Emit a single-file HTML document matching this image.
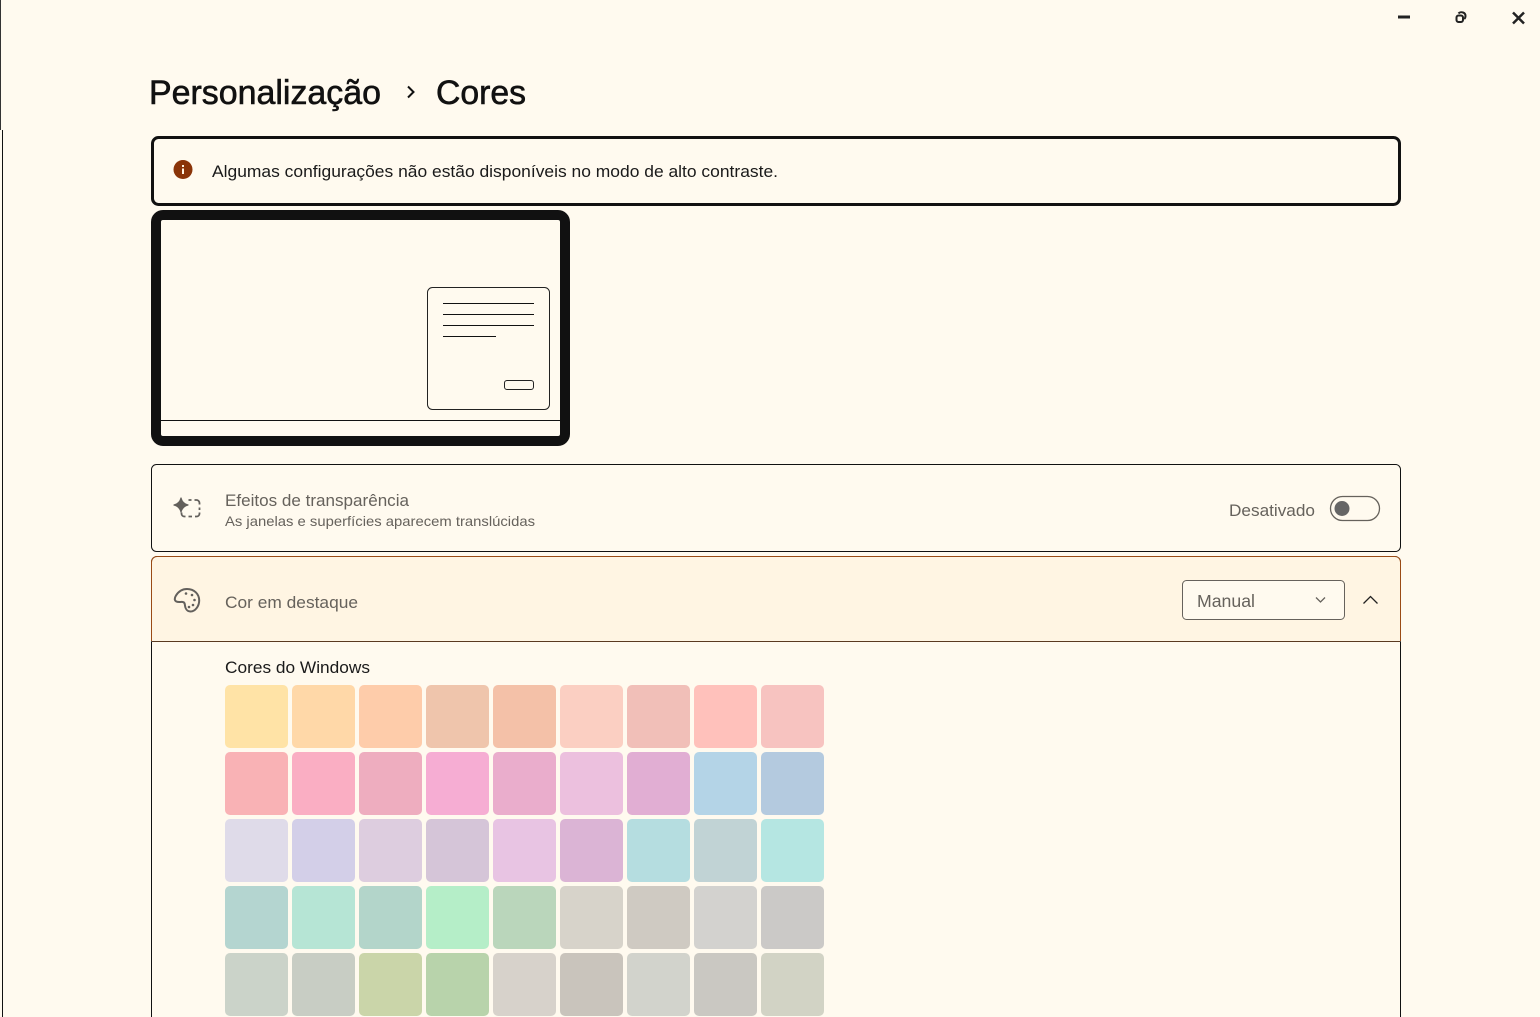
<!DOCTYPE html>
<html lang="pt"><head><meta charset="utf-8"><title>Cores</title>
<style>
html,body{margin:0;padding:0;width:1540px;height:1017px;overflow:hidden;background:#FFFAEF}
svg{display:block;position:absolute;left:0;top:0}
text{font-family:"Liberation Sans",sans-serif}
</style></head><body>
<svg width="1540" height="1017" viewBox="0 0 1540 1017" xmlns="http://www.w3.org/2000/svg">
<rect width="1540" height="1017" fill="#FFFAEF"/>
<rect x="0" y="0" width="1" height="130" fill="#333"/>
<rect x="2" y="130" width="1" height="887" fill="#111"/>

<!-- window controls -->
<rect x="1398" y="15.500" width="12" height="3" fill="#222"/>
<g fill="none" stroke="#222" stroke-width="2">
<rect x="1456.500" y="15.500" width="6.500" height="6.500" rx="2"/>
<path d="M1458.500 13.500c1-1.300 3-1.500 4.500-1 1.500.5 2.500 2 2.500 3.500 0 1.300-.5 2.300-1.300 3"/>
</g>
<path d="M1513 12.500l11 11M1524 12.500l-11 11" stroke="#222" stroke-width="2.500" fill="none"/>

<!-- title -->
<text x="149" y="104" font-size="34" fill="#111" stroke="#111" stroke-width="0.6" textLength="232" lengthAdjust="spacingAndGlyphs">Personalização</text>
<path d="M408 86.500l5.500 5.500-5.500 5.500" fill="none" stroke="#111" stroke-width="2"/>
<text x="436" y="104" font-size="34" fill="#111" stroke="#111" stroke-width="0.6" textLength="90" lengthAdjust="spacingAndGlyphs">Cores</text>

<!-- alert -->
<rect x="152.500" y="137.500" width="1247" height="67" rx="6" fill="#FFFAEF" stroke="#111" stroke-width="3"/>
<circle cx="183" cy="169.500" r="9.500" fill="#8A3408"/>
<rect x="182" y="168.500" width="2" height="5.500" fill="#FFF5E3"/>
<rect x="182" y="165" width="2" height="2" fill="#FFF5E3"/>
<text x="212" y="177" font-size="17" fill="#1a1a1a" textLength="566" lengthAdjust="spacingAndGlyphs">Algumas configurações não estão disponíveis no modo de alto contraste.</text>

<!-- preview -->
<rect x="156" y="215" width="409" height="226" rx="7" fill="#FFFAEF" stroke="#111" stroke-width="10"/>
<rect x="161" y="420" width="399" height="1" fill="#111"/>
<rect x="427.500" y="287.500" width="122" height="122" rx="5" fill="#FFFAEF" stroke="#222" stroke-width="1"/>
<rect x="443" y="303" width="91" height="1" fill="#111"/>
<rect x="443" y="314" width="91" height="1" fill="#111"/>
<rect x="443" y="325" width="91" height="1" fill="#111"/>
<rect x="443" y="336" width="53" height="1" fill="#111"/>
<rect x="504.500" y="380.500" width="29" height="9" rx="2.500" fill="none" stroke="#222" stroke-width="1"/>

<!-- transparency card -->
<rect x="151.500" y="464.500" width="1249" height="87" rx="5" fill="#FFFAEF" stroke="#111" stroke-width="1"/>
<path d="M181 498c1 4 3 6 7 7-4 1-6 3-7 7-1-4-3-6-7-7 4-1 6-3 7-7z" fill="#63605c" stroke="#63605c" stroke-width="1.200" stroke-linejoin="round"/>
<path d="M188.500 500h3M194.500 500h2c1.500 0 3 1.300 3 3v1.500M199.500 507.500v2.500M199.500 512.500v1c0 1.700-1.300 3-3 3h-1.500M192 516.500h-3.500M185.500 516.500h-1c-1.700 0-3-1.300-3-3v-1" fill="none" stroke="#63605c" stroke-width="1.800"/>
<text x="225" y="506" font-size="17" fill="#66625c" textLength="184" lengthAdjust="spacingAndGlyphs">Efeitos de transparência</text>
<text x="225" y="526" font-size="14" fill="#66625c" textLength="310" lengthAdjust="spacingAndGlyphs">As janelas e superfícies aparecem translúcidas</text>
<text x="1229" y="516" font-size="17" fill="#66625c" textLength="86" lengthAdjust="spacingAndGlyphs">Desativado</text>
<rect x="1330.500" y="496.500" width="49" height="24" rx="12" fill="none" stroke="#66625c" stroke-width="1.300"/>
<circle cx="1342" cy="508.500" r="7.500" fill="#666"/>

<!-- accent card -->
<path d="M151.500 1017V562c0-3 2.500-5.500 5.500-5.500h1238c3 0 5.500 2.500 5.500 5.500v455" fill="#FFFAEF" stroke="#111" stroke-width="1"/>
<path d="M151.500 641.500V562c0-3 2.500-5.500 5.500-5.500h1238c3 0 5.500 2.500 5.500 5.500v79.500z" fill="#FFF5E3"/>
<path d="M151.500 641V562c0-3 2.500-5.500 5.500-5.500h1238c3 0 5.500 2.500 5.500 5.500v79" fill="none" stroke="#9A4A14" stroke-width="1"/>
<rect x="152" y="641" width="1248" height="1" fill="#5a3a20"/>
<path d="M187 589c-5 0-8.500 2.500-11 6.500-1.700 2.700-1.700 5 .3 6 2 1 4.500.2 6.500.5 2 .3 2 2 2.200 3.700.3 2.300 1.700 5.800 5.500 5.800 4.800 0 8.700-5.500 8.700-11 0-6.500-5-11.500-12.200-11.500z" fill="none" stroke="#63605c" stroke-width="2"/>
<circle cx="186" cy="593.500" r="1.300" fill="#63605c"/><circle cx="192" cy="595" r="1.300" fill="#63605c"/><circle cx="194.500" cy="600" r="1.300" fill="#63605c"/><circle cx="193" cy="605" r="1.300" fill="#63605c"/><circle cx="189" cy="607" r="1.300" fill="#63605c"/>
<text x="225" y="608" font-size="17" fill="#66625c" textLength="133" lengthAdjust="spacingAndGlyphs">Cor em destaque</text>
<rect x="1182.500" y="580.500" width="162" height="39" rx="4" fill="#FFFAEF" stroke="#66625c" stroke-width="1"/>
<text x="1197" y="607" font-size="17.500" fill="#66625c" textLength="58" lengthAdjust="spacingAndGlyphs">Manual</text>
<path d="M1316 597.500l4.500 4.500 4.500-4.500" fill="none" stroke="#66625c" stroke-width="1.300"/>
<path d="M1363.500 603.500l7-7 7 7" fill="none" stroke="#222" stroke-width="1.300"/>

<text x="225" y="673" font-size="17" fill="#1a1a1a" textLength="145" lengthAdjust="spacingAndGlyphs">Cores do Windows</text>

<g>
<rect x="225" y="685" width="63" height="63" rx="5" fill="#FFE3A6"/><rect x="292" y="685" width="63" height="63" rx="5" fill="#FFD8A8"/><rect x="359" y="685" width="63" height="63" rx="5" fill="#FECCAA"/><rect x="426" y="685" width="63" height="63" rx="5" fill="#EFC5AC"/><rect x="493" y="685" width="63" height="63" rx="5" fill="#F4C1A8"/><rect x="560" y="685" width="63" height="63" rx="5" fill="#FBCFC2"/><rect x="627" y="685" width="63" height="63" rx="5" fill="#F1BFB8"/><rect x="694" y="685" width="63" height="63" rx="5" fill="#FFC1BB"/><rect x="761" y="685" width="63" height="63" rx="5" fill="#F7C3C0"/>
<rect x="225" y="752" width="63" height="63" rx="5" fill="#F9B2B5"/><rect x="292" y="752" width="63" height="63" rx="5" fill="#FAAEC3"/><rect x="359" y="752" width="63" height="63" rx="5" fill="#EEADBF"/><rect x="426" y="752" width="63" height="63" rx="5" fill="#F6ADD3"/><rect x="493" y="752" width="63" height="63" rx="5" fill="#EAADCC"/><rect x="560" y="752" width="63" height="63" rx="5" fill="#ECC0DE"/><rect x="627" y="752" width="63" height="63" rx="5" fill="#E1AED3"/><rect x="694" y="752" width="63" height="63" rx="5" fill="#B4D4E7"/><rect x="761" y="752" width="63" height="63" rx="5" fill="#B4CADF"/>
<rect x="225" y="819" width="63" height="63" rx="5" fill="#DFDBE9"/><rect x="292" y="819" width="63" height="63" rx="5" fill="#D3CFE8"/><rect x="359" y="819" width="63" height="63" rx="5" fill="#DDCDDF"/><rect x="426" y="819" width="63" height="63" rx="5" fill="#D5C5D8"/><rect x="493" y="819" width="63" height="63" rx="5" fill="#E8C4E3"/><rect x="560" y="819" width="63" height="63" rx="5" fill="#DBB4D5"/><rect x="627" y="819" width="63" height="63" rx="5" fill="#B5DDE0"/><rect x="694" y="819" width="63" height="63" rx="5" fill="#C1D3D5"/><rect x="761" y="819" width="63" height="63" rx="5" fill="#B5E6E2"/>
<rect x="225" y="886" width="63" height="63" rx="5" fill="#B4D5D0"/><rect x="292" y="886" width="63" height="63" rx="5" fill="#B6E5D5"/><rect x="359" y="886" width="63" height="63" rx="5" fill="#B3D5CA"/><rect x="426" y="886" width="63" height="63" rx="5" fill="#B5EEC8"/><rect x="493" y="886" width="63" height="63" rx="5" fill="#BAD6BB"/><rect x="560" y="886" width="63" height="63" rx="5" fill="#D7D3CA"/><rect x="627" y="886" width="63" height="63" rx="5" fill="#CFCAC2"/><rect x="694" y="886" width="63" height="63" rx="5" fill="#D3D2CF"/><rect x="761" y="886" width="63" height="63" rx="5" fill="#CBC9C7"/>
<rect x="225" y="953" width="63" height="63" rx="5" fill="#CBD3C9"/><rect x="292" y="953" width="63" height="63" rx="5" fill="#C8CDC4"/><rect x="359" y="953" width="63" height="63" rx="5" fill="#CAD5A9"/><rect x="426" y="953" width="63" height="63" rx="5" fill="#B8D3AB"/><rect x="493" y="953" width="63" height="63" rx="5" fill="#D7D2CB"/><rect x="560" y="953" width="63" height="63" rx="5" fill="#C9C4BC"/><rect x="627" y="953" width="63" height="63" rx="5" fill="#D2D3CC"/><rect x="694" y="953" width="63" height="63" rx="5" fill="#CAC8C2"/><rect x="761" y="953" width="63" height="63" rx="5" fill="#D2D3C5"/>
</g>
</svg>
</body></html>
